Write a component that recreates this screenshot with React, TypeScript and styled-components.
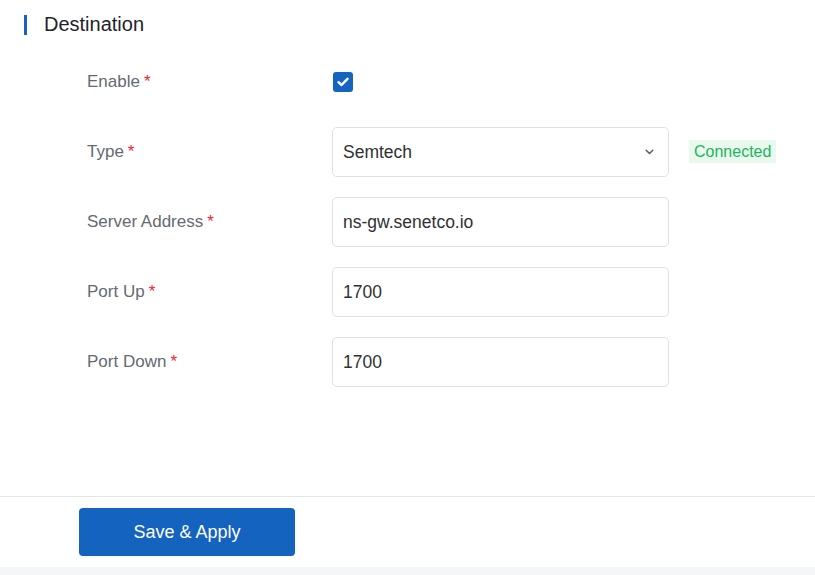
import styled, { createGlobalStyle } from 'styled-components'

const GlobalStyle = createGlobalStyle`
    html, body {
        margin: 0;
        padding: 0;
        background: #f5f6f8;
        font-family: "Liberation Sans", Arial, sans-serif;
    }
`

const Page = styled.div`
    background: #ffffff;
`

const Content = styled.section`
    height: 497px;
    border-bottom: 1px solid #e4e5e7;
    box-sizing: border-box;
`

const SectionHeader = styled.header`
    display: flex;
    align-items: center;
    gap: 17px;
    height: 49px;
    padding-left: 24px;
    h2{
        margin: 0;
        font-size: 20px;
        font-weight: 400;
        color: #1f2329;
    }
`

const Bar = styled.span`
    width: 3px;
    height: 20px;
    background: #1565c0;
`

const Form = styled.div`
    display: flex;
    flex-direction: column;
    gap: 20px;
    padding: 8px 0 0 87px;
`

const Row = styled.div`
    display: grid;
    grid-template-columns: 245px 337px auto;
    align-items: center;
    height: 50px;
`

const Label = styled.label`
    font-size: 17px;
    color: #646a73;
    span{
        color: #f5222d;
        margin-left: 4px;
    }
`

const Check = styled.span`
    display: flex;
    align-items: center;
    justify-content: center;
    width: 20px;
    height: 20px;
    margin-left: 1px;
    border-radius: 3px;
    background: #1565c0;
`

const Field = styled.div<{ $select?: boolean }>`
    display: flex;
    align-items: center;
    justify-content: space-between;
    height: 50px;
    box-sizing: border-box;
    padding: 0 14px 0 10px;
    border: 1px solid #dfe1e5;
    border-radius: 5px;
    font-size: 17.5px;
    color: #303133;
    cursor: ${props => props.$select ? 'pointer' : 'text'};
`

const Badge = styled.span`
    margin-left: 20px;
    padding: 3px 5px;
    font-size: 16px;
    line-height: 18px;
    color: #20b45c;
    background: #e9f9ee;
`

const Footer = styled.footer`
    height: 70px;
    padding: 11px 0 0 79px;
    box-sizing: border-box;
`

const Button = styled.button`
    width: 216px;
    height: 48px;
    border: none;
    border-radius: 4px;
    background: #1363bf;
    color: #ffffff;
    font-family: "Liberation Sans", Arial, sans-serif;
    font-size: 18px;
    cursor: pointer;
`

const fields = [
    { label: 'Server Address', value: 'ns-gw.senetco.io' },
    { label: 'Port Up', value: '1700' },
    { label: 'Port Down', value: '1700' },
]

const App = () => {
    return (
        <>
            <GlobalStyle />
            <Page>
                <Content>
                    <SectionHeader>
                        <Bar />
                        <h2>Destination</h2>
                    </SectionHeader>
                    <Form>
                        <Row>
                            <Label>Enable<span>*</span></Label>
                            <Check>
                                <svg width="12" height="10" viewBox="0 0 12 10">
                                    <path d="M1.5 5.2 4.5 8 10.5 1.8" fill="none" stroke="#fff" strokeWidth="2.4" strokeLinecap="round" strokeLinejoin="round" />
                                </svg>
                            </Check>
                        </Row>
                        <Row>
                            <Label>Type<span>*</span></Label>
                            <Field $select>
                                Semtech
                                <svg width="9" height="6" viewBox="0 0 9 6">
                                    <path d="M1.2 1.2 4.5 4.5 7.8 1.2" fill="none" stroke="#606266" strokeWidth="1.6" strokeLinecap="round" strokeLinejoin="round" />
                                </svg>
                            </Field>
                            <div><Badge>Connected</Badge></div>
                        </Row>
                        {fields.map(item => (
                            <Row key={item.label}>
                                <Label>{item.label}<span>*</span></Label>
                                <Field>{item.value}</Field>
                            </Row>
                        ))}
                    </Form>
                </Content>
                <Footer>
                    <Button>Save &amp; Apply</Button>
                </Footer>
            </Page>
        </>
    )
}

export default App
